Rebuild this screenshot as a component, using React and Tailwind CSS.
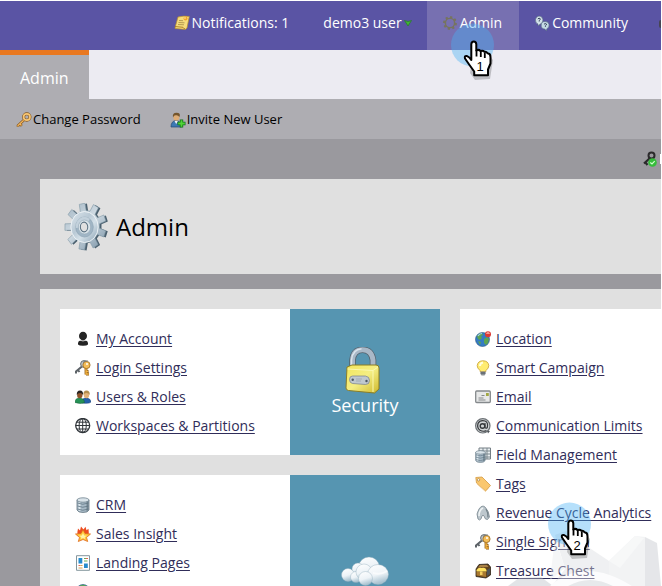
import React from "react";

function gearPath(cx, cy, teeth, outer, inner) {
  const step = (Math.PI * 2) / teeth;
  const points = [];
  for (let i = 0; i < teeth; i++) {
    const a = i * step + 0.2;
    [
      [inner, -0.3],
      [outer, -0.2],
      [outer, 0.2],
      [inner, 0.3],
    ].forEach(([r, k]) => {
      points.push(`${(cx + r * Math.cos(a + k * step)).toFixed(2)} ${(cy + r * Math.sin(a + k * step)).toFixed(2)}`);
    });
  }
  return `M${points.join("L")}Z`;
}

function Icon({ children }) {
  return (
    <svg className="size-4 shrink-0" viewBox="0 0 16 16" fill="none" aria-hidden="true">
      {children}
    </svg>
  );
}

const NoteIcon = () => (
  <Icon>
    <path d="M4 2q6-1.500 11.300-.5L13 13q-1 1.700-3 1.300L1 13.500 1.500 11z" fill="#f5dc7c" stroke="#b98e2c" strokeWidth=".7" />
    <path d="M1 11.500l8 .8q1 2 2 1.500" stroke="#a87c22" strokeWidth=".9" />
    <path d="M5 5.500l4 .2M4.500 7.500l6 .3M4 9.500l6 .3" stroke="#a58c48" strokeWidth=".8" />
    <circle cx="11.500" cy="3.500" r="2" fill="#f5a52a" />
    <circle cx="11" cy="3" r=".8" fill="#fff1b5" />
  </Icon>
);

const SmallGearIcon = () => (
  <Icon>
    <path d={gearPath(8, 8, 8, 7, 5.300)} fill="#76745f" />
    <circle cx="8" cy="8" r="3.900" fill="#7770b1" />
  </Icon>
);

const CommunityIcon = () => (
  <Icon>
    <path d="M5 1a4.200 4.200 0 0 1 1 8.200L4 11V9A4.200 4.200 0 0 1 5 1z" fill="#d3e2ea" stroke="#53667c" strokeWidth=".6" />
    <path d="M11.300 6.500a3.800 3.800 0 0 1 1.500 7.300l-.3 2-1.800-1.700a3.800 3.800 0 0 1 .6-7.600z" fill="#c4dae4" stroke="#53667c" strokeWidth=".6" />
    <path d="M3.800 4q1.300-1.500 2.400-.3.500 1-1 1.800v1M10 9.300q1.200-1.500 2.400-.3.500 1-1 1.800v1" stroke="#38465b" strokeWidth="1" />
  </Icon>
);

const KeyIcon = () => (
  <Icon>
    <path d="M8.500 7.500L2 13.500v1.200M4 12l1.800 1.800" stroke="#87581e" strokeWidth="2.600" />
    <path d="M8.500 7.500L2 13.500v1M4 12l1.500 1.500" stroke="#f4b860" strokeWidth="1.200" />
    <circle cx="10.800" cy="5" r="3.200" stroke="#87581e" strokeWidth="3" />
    <circle cx="10.800" cy="5" r="3.200" stroke="#f8c673" strokeWidth="1.700" />
  </Icon>
);

const InviteIcon = () => (
  <Icon>
    <path d="M1 15q0-6 5-6.500 5 .5 5.500 6.500z" fill="#3d79b4" stroke="#234973" strokeWidth=".7" />
    <path d="M4.500 9l1.700 3L8 9z" fill="#eef3f7" />
    <ellipse cx="6.300" cy="5" rx="3" ry="3.700" fill="#dfad76" />
    <path d="M3 5.500Q2 .8 6.500.8T9.500 5Q8 3 6 3.300 4 3 3 5.500z" fill="#74552c" />
    <path d="M11.500 7.500v8M7.500 11.500h8" stroke="#12701a" strokeWidth="3.400" />
    <path d="M11.500 8.200v6.600M8.200 11.500h6.600" stroke="#52d437" strokeWidth="1.800" />
  </Icon>
);

const ApprovedKeyIcon = () => (
  <Icon>
    <path d="M8 7L2 12.500M3 11l2.500 3" stroke="#2b2a2c" strokeWidth="2.200" />
    <circle cx="9.500" cy="4.500" r="3" stroke="#2b2a2c" strokeWidth="2" />
    <circle cx="10.500" cy="11.500" r="4.300" fill="#35bd3b" />
    <path d="M8.300 11.500l1.700 1.500 2.700-2.800" stroke="#d5ffd2" strokeWidth="1.200" />
  </Icon>
);

const AccountIcon = () => (
  <Icon>
    <ellipse cx="8" cy="5" rx="4" ry="4.300" fill="#242424" />
    <path d="M3 13.500v-1.500q0-2 3-2.700h4q3 .7 3 2.700v1.500q-1 1.200-5 1.200t-5-1.200z" fill="#242424" />
    <path d="M5 9.200q3 1.600 6 0" stroke="#fff" strokeWidth=".7" />
  </Icon>
);

const KeysIcon = () => (
  <Icon>
    <path d="M7.500 6L1 11.500v2M3 10l1.500 2" stroke="#5d6368" strokeWidth="2" />
    <circle cx="9" cy="4" r="3.400" fill="#bdc3c7" stroke="#697076" />
    <path d="M11 7.500v7M11 14h3M11 11.500h2.500" stroke="#8d5a16" strokeWidth="2.800" />
    <path d="M11 7.500v6.500h2.800M11 11.500h2" stroke="#f5b645" strokeWidth="1.300" />
    <circle cx="11.500" cy="5" r="3.600" fill="#f3bd59" stroke="#9b691f" strokeWidth=".8" />
    <circle cx="12" cy="4" r="1" fill="#fff" />
    <path d="M8 2.500q2-2.500 5-1.500" stroke="#74797c" strokeWidth=".9" />
  </Icon>
);

const UsersIcon = () => (
  <Icon>
    <path d="M7 14q-.5-5 4-5t5 4q-2 2-9 1z" fill="#2360ab" stroke="#173d70" strokeWidth=".5" />
    <ellipse cx="11.500" cy="6" rx="2.700" ry="3.300" fill="#e1b27a" />
    <path d="M8.500 6Q8 1.500 11.500 1.500T14.800 6q-1-2-3.500-2-2 0-2.800 2z" fill="#b28c4d" />
    <path d="M0 13.500Q0 9 4.500 9T9.500 13.500Q6 15.500 0 13.500z" fill="#259256" stroke="#125b32" strokeWidth=".5" />
    <ellipse cx="4.800" cy="6" rx="2.700" ry="3.300" fill="#8e522a" />
    <path d="M1.800 6Q1.500 1.500 5 1.500T8 6Q7 4 5 4 2.800 4 1.800 6z" fill="#282321" />
  </Icon>
);

const WireGlobeIcon = () => (
  <Icon>
    <circle cx="7.700" cy="7.500" r="7" stroke="#30353a" strokeWidth="1.300" />
    <ellipse cx="7.700" cy="7.500" rx="3.600" ry="7" stroke="#30353a" />
    <path d="M7.700.5v14M.7 7.500h14M1.700 4.200h12M1.700 11h12" stroke="#30353a" />
  </Icon>
);

const Globe = () => (
  <>
    <circle cx="7.500" cy="8.500" r="7" fill="#347bc4" stroke="#29547d" strokeWidth=".6" />
    <path d="M2 5q2-3 5-3l1 2-2 1 1 2-2 2-2-1zM9 8l3-2 2 2-1 4-2 2-2-2zM3 10l3 1-1 3z" fill="#5ca451" />
    <path d="M3 5q1.500-2.500 4-2.500" stroke="#a9d5ef" strokeWidth="1.200" />
  </>
);

const GlobeIcon = () => (
  <Icon>
    <circle cx="8" cy="7.500" r="7" fill="#347bc4" stroke="#29547d" strokeWidth=".6" />
    <path d="M3 3.500q2-2.800 5-2.800t5 2.800l-2 2-6 1z" fill="#57a35a" />
  </Icon>
);

const LocationIcon = () => (
  <Icon>
    <Globe />
    <circle cx="13" cy="3.200" r="3" fill="#dc3934" />
    <path d="M11.500 2.700q1.500-1.500 3 0" stroke="#ffc2b8" strokeWidth="1.200" />
  </Icon>
);

const BulbIcon = () => (
  <Icon>
    <path d="M5 10.500Q2 8 2.200 5.500 2.800.8 8 .8t5.800 4.700Q14 8 11 10.500v1H5z" fill="#ffec72" stroke="#c69f34" strokeWidth=".8" />
    <path d="M5 6q0-3 3-3.500" stroke="#fffde1" strokeWidth="2" />
    <path d="M5.500 11.500h5v2.500L9.500 15.500h-3L5.500 14z" fill="#8c9297" />
    <path d="M5.500 13h5" stroke="#444b50" strokeWidth=".9" />
  </Icon>
);

const EmailIcon = () => (
  <Icon>
    <rect x=".7" y="2" width="14.600" height="11.500" rx="1" fill="#e7e8e8" stroke="#85898c" strokeWidth="1.300" />
    <path d="M3.500 9h5M3.500 11h7M6.500 6.500h3" stroke="#85898c" />
    <path d="M11 4h2.800v3H11z" fill="#a2a843" />
  </Icon>
);

const AtIcon = () => (
  <Icon>
    <circle cx="7.800" cy="7.800" r="7.200" fill="#d0d4d6" stroke="#6d7276" strokeWidth="1.200" />
    <circle cx="7.500" cy="8" r="2.300" stroke="#36393c" strokeWidth="1.400" />
    <path d="M10 5v4.500q1 1.500 2.300 0Q13.500 4.500 10 3 5 1.800 3 5.500 1.800 10 5 12.300q3 1.700 6.500.3" stroke="#36393c" strokeWidth="1.200" />
    <path d="M12 12.500l3 .5-2 2.500z" fill="#4e5357" />
  </Icon>
);

const Cylinder = () => (
  <>
    <path d="M2 3v10q1 2.500 6 2.500t6-2.500V3z" fill="#a7b9c6" stroke="#657783" strokeWidth=".8" />
    <path d="M3.500 4v9.500l2 .8V4z" fill="#dbe5eb" />
    <path d="M11.500 4v10.500l2-1.500V3z" fill="#72848f" />
    <path d="M2.500 6q5 2.500 11 0M2.500 9q5 2.500 11 0M2.500 12q5 2.500 11 0" stroke="#5f7583" strokeWidth=".8" />
    <ellipse cx="8" cy="3" rx="6" ry="2.200" fill="#d9e3e9" stroke="#70838f" strokeWidth=".8" />
  </>
);

const DatabaseIcon = () => <Icon><Cylinder /></Icon>;

const FieldIcon = () => (
  <Icon>
    <path d="M4 1h11.500v11H4z" fill="#e9eef0" stroke="#747e85" />
    <path d="M4 4h11M4 7h11M4 10h11M8 1v11M12 1v11" stroke="#7b878e" />
    <g transform="translate(-1 3) scale(.8)"><Cylinder /></g>
  </Icon>
);

const TagIcon = () => (
  <Icon>
    <path d="M.8 1.500L7 1l8.500 8.500-5 5.500-9-8z" fill="#fac76e" stroke="#d39b44" strokeWidth=".8" />
    <circle cx="3.500" cy="3.800" r="1.200" fill="#fff" stroke="#a57830" strokeWidth=".7" />
    <path d="M2 8l8.500 7.500 3-3" stroke="#f1d09b" />
  </Icon>
);

const RevenueIcon = () => (
  <Icon>
    <path d="M3 14Q.5 9 4 4q3-4.500 6-2 4 4 4.500 10l-2 2.500Q10 15 9 11q-1-2-2 0-.5 3.500-2.500 4z" fill="#bdc7cd" stroke="#79868f" strokeWidth=".8" />
    <path d="M4 11q0-6 4-8" stroke="#f0f4f5" strokeWidth="1.600" />
    <path d="M11 4q2.500 4 2 8.500" stroke="#75838b" strokeWidth="1.300" />
  </Icon>
);

const ChestIcon = () => (
  <Icon>
    <path d="M1 6l3-4.500L13 1l2.500 3v8L11 15 1 13.500z" fill="#60421d" stroke="#2d2318" strokeWidth=".8" />
    <path d="M3 4.500l2-2.500h7l1.500 2z" fill="#aa8145" />
    <path d="M1.500 7q2-3 5-2 4-1 5 2v1.500H1.500z" fill="#ffe260" />
    <path d="M1.500 9h9.500v5L1.500 12.500z" fill="#a97930" />
    <path d="M5 8.500h2.500V12H5z" fill="#f4cf60" />
    <path d="M12 7l3-2v6l-3 2z" fill="#4e545a" />
  </Icon>
);

const FlameStarIcon = () => (
  <Icon>
    <path d="M2.500 10Q2 6 3 2.500l2 2L6 .5l2.500 3L10.500.8l1 3.500 2-1.500q.8 4-.5 7z" fill="#ed4c21" />
    <path d="M8 3.500l2 4 5.500.5-4 3.500 1.200 4L8 13.500 3.300 15.500l1.200-4L.5 8l5.500-.5z" fill="#ffc53c" stroke="#de691e" strokeWidth=".8" />
    <path d="M8 7l1.200 2.500 2.500.3-2 1.500.5 1.700L8 12l-2.200 1 .5-1.700-2-1.500 2.500-.3z" fill="#fff4a7" />
  </Icon>
);

const PageIcon = () => (
  <Icon>
    <path d="M1.500.7h13v14.600h-13z" fill="#fff" stroke="#84969d" />
    <path d="M3.500 3h3.800v5.500H3.500zM9 8.500h3.800V13H9z" fill="#258bce" />
    <path d="M9 3.500h2M9 6h3.500" stroke="#6bae5b" strokeWidth="1.200" />
    <path d="M11 3.500h2M3.500 10.500h2" stroke="#df6955" strokeWidth="1.200" />
    <path d="M5.500 10.500h2M3.500 13h4" stroke="#d2a252" strokeWidth="1.200" />
  </Icon>
);

const BigGear = () => (
  <svg className="h-12 w-11 shrink-0" viewBox="0 0 44 48" aria-hidden="true">
    <defs>
      <linearGradient id="steel" x1="0" y1="0" x2="1" y2="1">
        <stop offset="0" stopColor="#a1b4c2" />
        <stop offset=".45" stopColor="#d0dbe3" />
        <stop offset="1" stopColor="#7992a5" />
      </linearGradient>
      <linearGradient id="disc" x1="0" y1="0" x2="1" y2="1">
        <stop offset="0" stopColor="#dde6ec" />
        <stop offset=".4" stopColor="#b9c9d5" />
        <stop offset=".6" stopColor="#d4e0e8" />
        <stop offset="1" stopColor="#8ba3b5" />
      </linearGradient>
    </defs>
    <g transform="translate(23.500 24) rotate(8) scale(.88 1)">
      <path d={gearPath(0, 0, 9, 23.500, 16)} fill="#4b606f" />
    </g>
    <g transform="translate(21.500 23.500) rotate(8) scale(.88 1)">
      <path d={gearPath(0, 0, 9, 23.500, 16)} fill="url(#steel)" stroke="#8298a6" strokeWidth=".6" />
    </g>
    <g transform="translate(20.500 24) scale(.88 1)">
      <circle r="15.500" fill="url(#disc)" stroke="#eef3f6" />
      <circle r="10" fill="#a0b5c5" stroke="#8ba2b3" strokeWidth=".7" />
      <path d="M-10 1A10 10 0 0 1 6-8L0 0z" fill="#dce6ed" opacity=".6" />
      <circle r="7" fill="#dbe5eb" stroke="#96a9b7" strokeWidth=".7" />
      <ellipse cx="-.5" rx="4.200" ry="4.800" fill="#e0e0e0" stroke="#5b7182" strokeWidth="1.200" />
    </g>
  </svg>
);

const LockPicture = () => (
  <svg className="size-12" viewBox="0 0 48 48" aria-hidden="true">
    <defs>
      <linearGradient id="brass" x1="0" y1="0" x2="1" y2="1">
        <stop offset="0" stopColor="#f2e65b" />
        <stop offset=".5" stopColor="#f4ee83" />
        <stop offset="1" stopColor="#cfb82c" />
      </linearGradient>
    </defs>
    <g transform="translate(-1 -1)">
      <path d="M12.500 25V14Q13.500 3.800 22.500 3.800T33 14v12" fill="none" stroke="#53616c" strokeWidth="6.500" />
      <path d="M12.500 25V14Q13.500 3.800 22.500 3.800T33 14v12" fill="none" stroke="#a9b8c7" strokeWidth="5" />
      <path d="M11.500 24V14Q12.500 3.500 21.500 2.800" fill="none" stroke="#dce5ed" strokeWidth="1.500" />
      <path d="M7 21l5-2h24q3 0 3 3v21l-4.500 4-26-2.500Q6 44 6 42z" fill="url(#brass)" stroke="#8a7d27" />
      <path d="M7.500 23l25.500 1.500 5-3.500M33 25v21" fill="none" stroke="#fbf8b0" />
      <path d="M12.500 30h13q4 .5 4 4.500t-4 4l-13-1q-3-.5-3-4t3-3.500z" fill="#bfc8cf" stroke="#77808a" strokeWidth=".7" />
      <circle cx="12.700" cy="33.700" r="1.200" fill="#4b5663" />
      <circle cx="26.500" cy="35" r="1.200" fill="#4b5663" />
      <path d="M16 33h6M16 35h5" stroke="#a3adb5" />
    </g>
  </svg>
);

const CloudPicture = () => (
  <svg className="size-12" viewBox="0 0 48 48" aria-hidden="true">
    <defs>
      <linearGradient id="cloud" x1="0" y1="0" x2=".3" y2="1">
        <stop offset="0" stopColor="#fff" />
        <stop offset=".6" stopColor="#edf3f7" />
        <stop offset="1" stopColor="#a9c3d1" />
      </linearGradient>
    </defs>
    <g fill="url(#cloud)" stroke="#8fabbb" strokeWidth=".4">
      <ellipse cx="28" cy="19" rx="10" ry="9" />
      <circle cx="17" cy="22" r="6" />
      <circle cx="7" cy="28" r="6.500" />
      <circle cx="15" cy="30" r="5.500" />
      <circle cx="23" cy="25" r="8" />
      <ellipse cx="37" cy="27.500" rx="10.500" ry="10" />
      <circle cx="24.500" cy="31.500" r="7" />
    </g>
    <path d="M32 26q8 2 14-2" stroke="#fff" strokeWidth="2" opacity=".6" fill="none" />
  </svg>
);

function Pointer({ step }) {
  return (
    <svg className="h-16 w-12" viewBox="0 0 48 64" aria-hidden="true">
      <circle cx="21.500" cy="22" r="21.500" fill="#49b2f4" opacity=".4" />
      <g transform="translate(12 17)">
        <path d="M10 8v-3l3 6 12 3 4 5-3 19-15 1-5-7z" fill="#000" opacity=".2" transform="translate(1 1)" />
        <path
          d="M8.300 18V4.200Q8.500 1.500 10.800 1.500T13.300 4.200V10.500Q15.500 9 17.500 11q2.300-1 4 .8 2-.3 3 1.400 3 .2 3 3.800v6.500L25 29.500v5.700H11.200v-3.700L6.500 25 2 18.500q-.8-3 1.800-2.500Q6 16.500 8.300 20z"
          fill="#fff"
          stroke="#000"
          strokeWidth="2"
          strokeLinejoin="round"
        />
        <path d="M13.500 10v6.500M17.800 11v6M21.800 12.500V18" stroke="#000" strokeWidth="1.800" fill="none" />
        <text x="17" y="30.500" textAnchor="middle" className="font-['Liberation_Sans',sans-serif] text-[13px]" fill="#000">
          {step}
        </text>
      </g>
    </svg>
  );
}

const WatermarkGear = () => (
  <svg className="h-14 w-40" viewBox="0 0 160 56" aria-hidden="true">
    <g opacity=".4">
      <path d="M6 56l11-8 22-1 12 9z" fill="#b9bec4" />
      <path d="M53 5L64 1l16 12 27 18v25H50l13-17z" fill="#d8dbdf" />
      <path d="M53 8l10 30-15 12z" fill="#e8eaed" />
      <path d="M107 31l26-25 10 1v49h-36z" fill="#dfe2e5" />
      <path d="M143 7l12 6 4 43h-16z" fill="#bfc3c9" />
      <path d="M107 31l26-25 9 2-24 30z" fill="#eceef0" />
      <path d="M48 56q34-30 82 0z" fill="#fafafb" />
      <path d="M66 56q22-12 45 0z" fill="#c4c9ce" />
    </g>
  </svg>
);

const securityLinks = [
  ["My Account", AccountIcon],
  ["Login Settings", KeysIcon],
  ["Users & Roles", UsersIcon],
  ["Workspaces & Partitions", WireGlobeIcon],
];

const integrationLinks = [
  ["CRM", DatabaseIcon],
  ["Sales Insight", FlameStarIcon],
  ["Landing Pages", PageIcon],
  ["", GlobeIcon],
];

const settingsLinks = [
  ["Location", LocationIcon],
  ["Smart Campaign", BulbIcon],
  ["Email", EmailIcon],
  ["Communication Limits", AtIcon],
  ["Field Management", FieldIcon],
  ["Tags", TagIcon],
  ["Revenue Cycle Analytics", RevenueIcon],
  ["Single Sign-On", KeysIcon],
  ["Treasure Chest", ChestIcon],
];

function LinkList({ items }) {
  return (
    <ul className="min-w-0 flex-1 bg-white p-[15px]">
      {items.map(([label, Glyph], i) => (
        <li key={i} className="flex h-[29px] items-center gap-[5px] text-sm whitespace-nowrap text-[#302d59]">
          <Glyph />
          {label && (
            <a href="#" className="underline underline-offset-2">
              {label}
            </a>
          )}
        </li>
      ))}
    </ul>
  );
}

function NavItem({ label, icon, active, caret }) {
  return (
    <li>
      <a href="#" className={`flex h-full items-center px-[15px] pb-[5px] ${active ? "bg-[#7770b1]" : ""}`}>
        {icon}
        <span className="px-0.5">{label}</span>
        {caret && (
          <svg className="size-2" viewBox="0 0 8 8" aria-hidden="true">
            <path d="M.5 1.500l3.500 1 3.500-1L4 7z" fill="#3fb531" stroke="#2b7b32" strokeWidth=".8" />
          </svg>
        )}
      </a>
    </li>
  );
}

export default function App() {
  return (
    <div className="relative flex h-screen flex-col overflow-hidden bg-white pt-px pr-px font-['Open_Sans',sans-serif]">
      <header className="shrink-0 bg-[#5a54a4] text-sm text-white">
        <nav className="h-[49px]">
          <ul className="flex h-full justify-end whitespace-nowrap">
            <NavItem label="Notifications: 1" icon={<NoteIcon />} />
            <NavItem label="demo3 user" caret />
            <NavItem label="Admin" icon={<SmallGearIcon />} active />
            <NavItem label="Community" icon={<CommunityIcon />} />
            <li className="flex w-4 items-center justify-end pb-1">
              <span className="h-2 w-0.5 rounded-l bg-[#474654]" />
            </li>
          </ul>
        </nav>
      </header>

      <div className="flex h-[49px] shrink-0 bg-[#ecebf2]">
        <a href="#" className="border-t-[5px] border-[#e97820] bg-[#aeadb2] px-5 pt-[11px] text-base text-white">
          Admin
        </a>
      </div>

      <div className="flex h-10 shrink-0 items-center gap-[29px] bg-[#aeadb2] px-4 pt-0.5 text-[13px] text-black">
        <button type="button" className="flex items-center gap-px">
          <KeyIcon />
          Change Password
        </button>
        <button type="button" className="flex items-center gap-px">
          <InviteIcon />
          Invite New User
        </button>
      </div>

      <main className="flex min-h-0 flex-1 flex-col bg-[#9a999e] pl-10">
        <div className="flex h-10 shrink-0 items-center justify-end gap-0.5">
          <ApprovedKeyIcon />
          <span className="h-2.5 w-px bg-white" />
        </div>

        <section className="mb-[15px] flex h-[95px] shrink-0 items-center gap-2 bg-[#e0e0e0] px-6">
          <BigGear />
          <h1 className="text-2xl text-black">Admin</h1>
        </section>

        <section className="flex shrink-0 gap-5 bg-[#e0e0e0] pt-5 pl-5">
          <div className="flex w-[380px] shrink-0 flex-col gap-5">
            <div className="flex">
              <LinkList items={securityLinks} />
              <a href="#" className="flex w-[150px] flex-col items-center justify-center bg-[#5695b1] pb-0.5 text-lg/5 text-white">
                <LockPicture />
                Security
              </a>
            </div>
            <div className="flex min-h-[216px]">
              <LinkList items={integrationLinks} />
              <div className="flex w-[150px] flex-col items-center justify-center bg-[#5695b1] pb-6">
                <CloudPicture />
              </div>
            </div>
          </div>
          <div className="flex min-w-0 flex-1">
            <LinkList items={settingsLinks} />
          </div>
        </section>
      </main>

      <div className="pointer-events-none absolute right-0 bottom-0">
        <WatermarkGear />
      </div>
      <div className="pointer-events-none absolute top-[23px] left-[451px]">
        <Pointer step={1} />
      </div>
      <div className="pointer-events-none absolute top-[502px] left-[548px]">
        <Pointer step={2} />
      </div>
    </div>
  );
}
